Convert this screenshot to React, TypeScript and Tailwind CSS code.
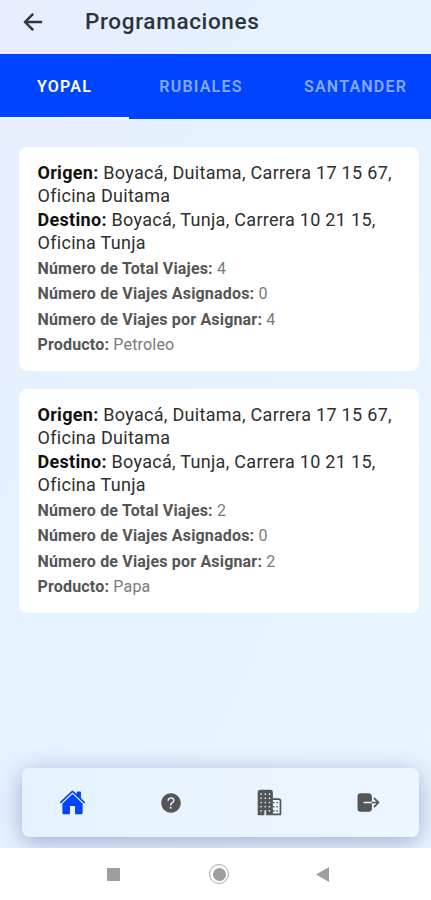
import { IoArrowBackSharp, IoBusiness, IoHelpCircle, IoHome, IoLogOut } from "react-icons/io5";

type Trip = {
  id: number;
  origin: string;
  destination: string;
  total: number;
  assigned: number;
  pending: number;
  product: string;
};

const trips: Trip[] = [
  {
    id: 1,
    origin: "Boyacá, Duitama, Carrera 17 15 67, Oficina Duitama",
    destination: "Boyacá, Tunja, Carrera 10 21 15, Oficina Tunja",
    total: 4,
    assigned: 0,
    pending: 4,
    product: "Petroleo",
  },
  {
    id: 2,
    origin: "Boyacá, Duitama, Carrera 17 15 67, Oficina Duitama",
    destination: "Boyacá, Tunja, Carrera 10 21 15, Oficina Tunja",
    total: 2,
    assigned: 0,
    pending: 2,
    product: "Papa",
  },
];

const Header = () => (
  <header className="flex h-[54px] shrink-0 items-center pb-[11px] pl-5">
    <IoArrowBackSharp size={26} className="text-[#30363c]" />
    <h1 className="ml-[39px] text-[22.5px] font-medium tracking-[0.65px] text-[#2b333b]">Programaciones</h1>
  </header>
);

const Tabs = () => (
  <div className="flex h-[65px] shrink-0 overflow-hidden bg-[#0044ff] text-base font-semibold text-[#85a9ff]">
    <button className="w-[129px] shrink-0 border-b-2 border-[#f0f7ff] pt-0.5 tracking-[1.2px] text-white">YOPAL</button>
    <button className="w-[144px] shrink-0 tracking-[1.2px]">RUBIALES</button>
    <button className="w-[165px] shrink-0 tracking-[1.2px]">SANTANDER</button>
  </div>
);

const Place = ({ label, value }: { label: string; value: string }) => (
  <p className="mb-[2px] text-[18px] leading-[22.5px] tracking-[0.3px] text-[#2e2e2e]">
    <b className="font-bold text-[#111]">{label}:</b> {value}
  </p>
);

const Detail = ({ label, value }: { label: string; value: string | number }) => (
  <p className="text-[16px] leading-[25.5px] tracking-[0.18px] text-[#7a7a7a]">
    <b className="font-bold text-[#555]">{label}:</b> {value}
  </p>
);

const TripCard = ({ trip }: { trip: Trip }) => (
  <article className="h-[224px] rounded-lg bg-white pt-[15px] pr-5 pl-[18.5px]">
    <Place label="Origen" value={trip.origin} />
    <Place label="Destino" value={trip.destination} />
    <div className="-mt-[0.5px]">
      <Detail label="Número de Total Viajes" value={trip.total} />
      <Detail label="Número de Viajes Asignados" value={trip.assigned} />
      <Detail label="Número de Viajes por Asignar" value={trip.pending} />
      <Detail label="Producto" value={trip.product} />
    </div>
  </article>
);

const BottomBar = () => (
  <nav className="mr-3 mb-[11px] ml-[22px] flex h-[69px] shrink-0 items-center rounded-lg bg-linear-to-r from-[#e6f2ff] to-[#ebf6ff] px-px text-[#555] shadow-[0_5px_24px_rgba(50,50,130,0.38)]">
    <div className="flex flex-1 justify-center">
      <IoHome size={27} className="text-[#0044ff]" />
    </div>
    <div className="flex flex-1 justify-center">
      <IoHelpCircle size={26} />
    </div>
    <div className="flex flex-1 justify-center">
      <IoBusiness size={27} />
    </div>
    <div className="flex flex-1 justify-center">
      <IoLogOut size={27} />
    </div>
  </nav>
);

const SystemBar = () => (
  <div className="flex h-[52px] shrink-0 items-center bg-white pl-[107px]">
    <div className="size-[13px] bg-[#9e9e9e]" />
    <div className="ml-[89px] flex size-5 items-center justify-center rounded-full border-[1.5px] border-[#a8a8a8]">
      <div className="size-[13px] rounded-full bg-[#9e9e9e]" />
    </div>
    <svg className="ml-[87px]" width="13" height="15" viewBox="0 0 13 15" fill="#9e9e9e">
      <path d="M13 0v15L0 7.5z" />
    </svg>
  </div>
);

export default function App() {
  return (
    <div className="flex h-[900px] w-[431px] flex-col overflow-hidden bg-white font-[Roboto,sans-serif]">
      <div className="flex min-h-0 flex-1 flex-col overflow-hidden bg-linear-to-br from-[#e8edff] via-[#e5f1ff] via-30% to-[#e8f6ff]">
        <Header />
        <Tabs />
        <main className="flex flex-1 flex-col gap-[18px] pt-7 pr-3 pl-[19px]">
          {trips.map((trip) => (
            <TripCard key={trip.id} trip={trip} />
          ))}
        </main>
        <BottomBar />
      </div>
      <SystemBar />
    </div>
  );
}
